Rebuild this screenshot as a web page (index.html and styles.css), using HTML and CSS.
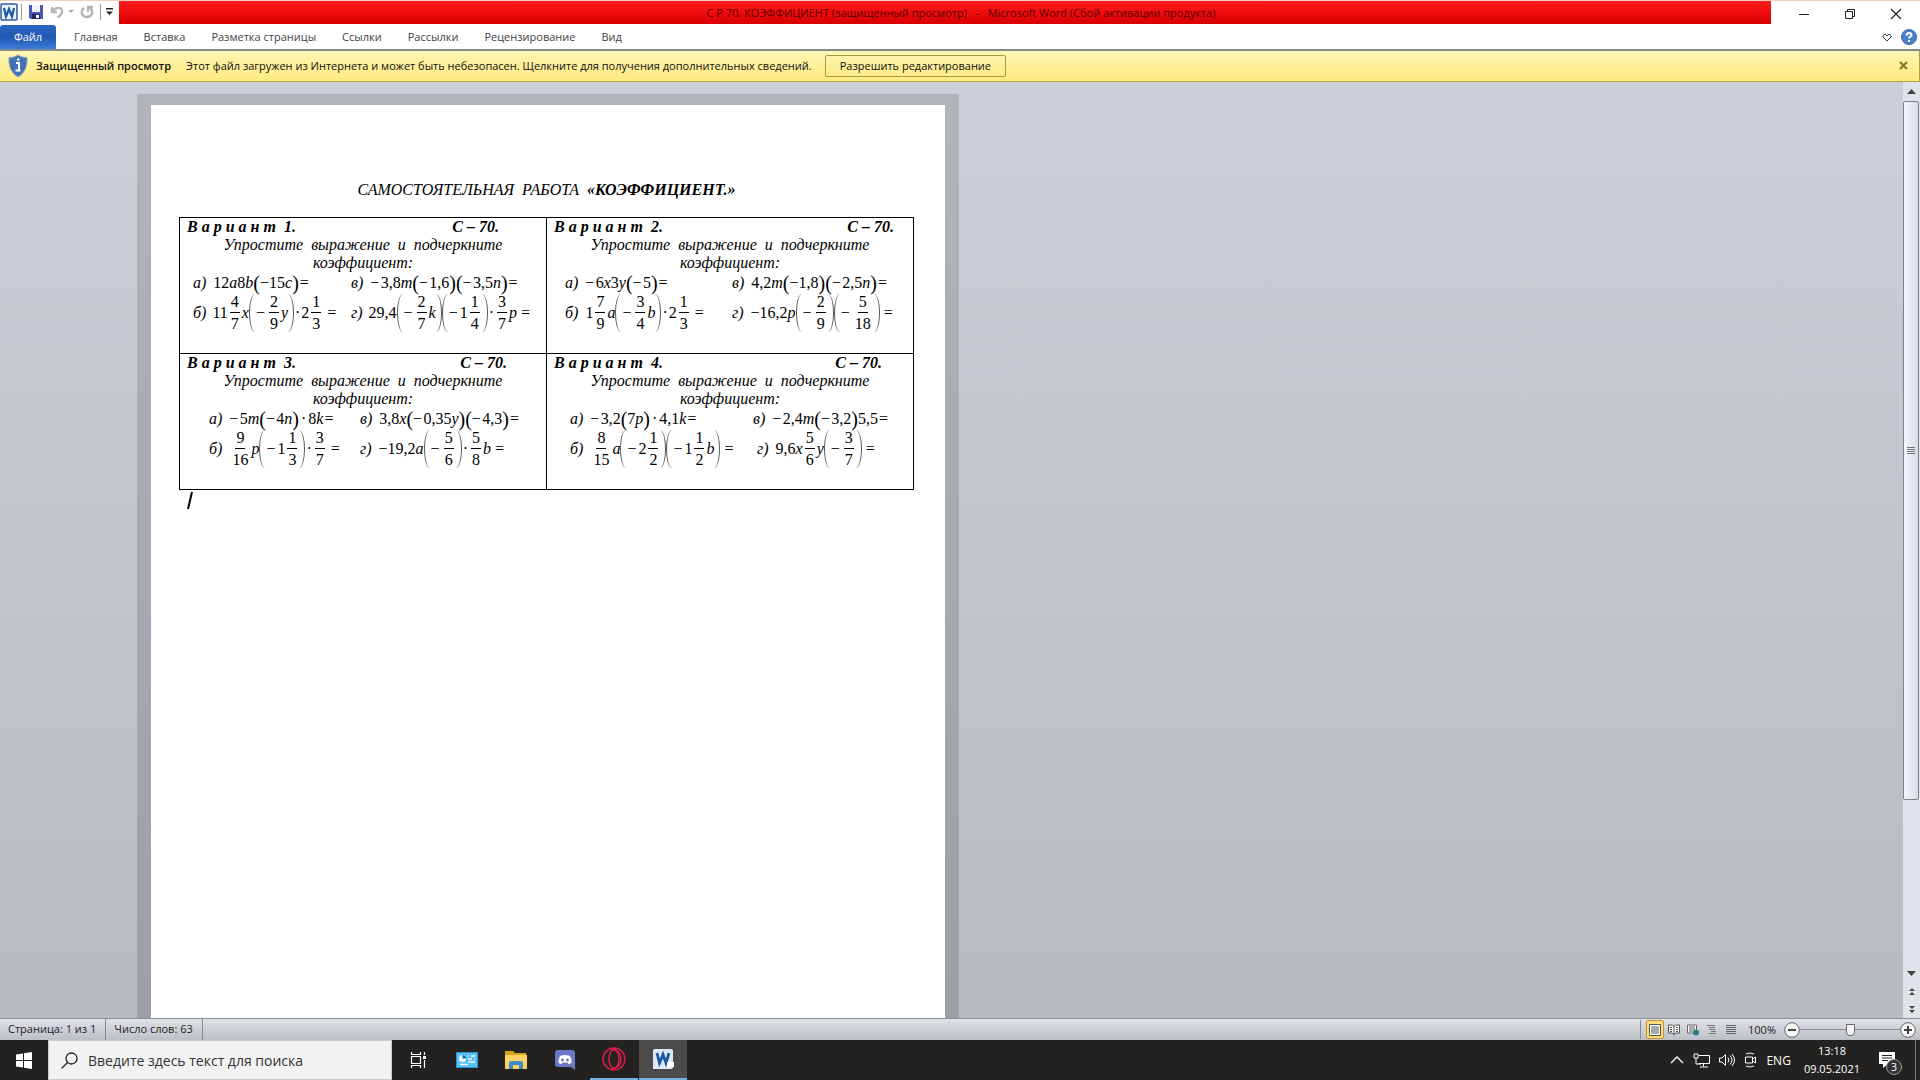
FILE: index.html
```html
<!DOCTYPE html>
<html lang="ru">
  <head>
    <meta charset="utf-8">
    <title>С Р 70. КОЭФФИЦИЕНТ</title>
    <link rel="stylesheet" href="styles.css">
  </head>

  <body>
    <header class="titlebar">
      <div class="quick">
        <svg class="word-icon" width="18" height="18" viewBox="0 0 18 18"><rect x="1" y="1" width="16" height="16" rx="1" fill="#eaf3fb" stroke="#2c5c9c" stroke-width="1.5"/><path d="M4 5l2 8.500 3-7.500 3 7.500L14 5" fill="none" stroke="#1f57a8" stroke-width="2.200"/></svg>
        <span class="sep"></span>
        <button class="save" aria-label="Сохранить"><svg width="16" height="16" viewBox="0 0 16 16"><path d="M1 1h14v14H2.500L1 13.500z" fill="#4d56b4"/><path d="M4 1h8v7H4z" fill="#f0f3fb"/><path d="M4 10h8v5H4z" fill="#20266e"/><path d="M8 11h3v3H8z" fill="#fff"/></svg></button>
        <button class="undo" aria-label="Отменить"><svg width="14" height="14" viewBox="0 0 14 14"><path d="M2 2v5h5M2.500 6.500C5 2 12 1.500 12 6c0 3-2 5-4.500 6.500" fill="none" stroke="#b5b5b5" stroke-width="2.400"/></svg></button>
        <span class="caret pale"></span>
        <button class="redo" aria-label="Повторить"><svg width="14" height="14" viewBox="0 0 14 14"><path d="M4 3C0 6 1.500 12 7 12s7-6 3-9M8 7V2h5" fill="none" stroke="#b5b5b5" stroke-width="2.400"/></svg></button>
        <span class="sep"></span>
        <button class="more" aria-label="Настройка панели"><svg width="9" height="9" viewBox="0 0 9 9"><path d="M1 1h7v1.500H1zM1 4.500h7L4.500 8z" fill="#222"/></svg></button>
      </div>
      <div class="caption">С Р 70. КОЭФФИЦИЕНТ (защищенный просмотр)&nbsp;&nbsp; -&nbsp;&nbsp; Microsoft Word (Сбой активации продукта)</div>
      <div class="window-buttons">
        <button aria-label="Свернуть"><svg width="12" height="12" viewBox="0 0 12 12"><path d="M1 6.500h10" stroke="#222"/></svg></button>
        <button aria-label="Восстановить"><svg width="12" height="12" viewBox="0 0 12 12" fill="none" stroke="#222"><path d="M1.500 3.500h7v7h-7zM3.500 3.500v-2h7v7h-2"/></svg></button>
        <button aria-label="Закрыть"><svg width="12" height="12" viewBox="0 0 12 12"><path d="M1 1l10 10M11 1L1 11" stroke="#222" stroke-width="1.200"/></svg></button>
      </div>
    </header>

    <nav class="ribbon">
      <button class="file">Файл</button>
      <button>Главная</button>
      <button>Вставка</button>
      <button>Разметка страницы</button>
      <button>Ссылки</button>
      <button>Рассылки</button>
      <button>Рецензирование</button>
      <button>Вид</button>
      <div class="ribbon-right">
        <button aria-label="Развернуть ленту"><svg width="10" height="9" viewBox="0 0 10 9"><path d="M1 2.500L3 1l2 2 2-2 2 1.500V4L5 8 1 4z" fill="none" stroke="#444"/></svg></button>
        <button aria-label="Справка"><svg width="16" height="16" viewBox="0 0 16 16"><circle cx="8" cy="8" r="7.500" fill="#4a80c8" stroke="#3566aa"/><path d="M5.500 6.500c0-3.500 5-3 5-.5 0 1.700-2.500 1.700-2.500 3.500M8 11v2" fill="none" stroke="#fff" stroke-width="2"/></svg></button>
      </div>
    </nav>

    <div class="notice">
      <svg class="shield" width="20" height="24" viewBox="0 0 20 24"><path d="M10 1c3 2 6 2.500 9 2.500C19.500 12 17 19 10 23 3 19 .5 12 1 3.500 4 3.500 7 3 10 1z" fill="#4272b4" stroke="#8fa8c8"/><path d="M8 9h3v7M7.500 16.500h5M9 5.500h2.500" fill="none" stroke="#fff" stroke-width="2"/></svg>
      <strong>Защищенный просмотр</strong>
      <span>Этот файл загружен из Интернета и может быть небезопасен. Щелкните для получения дополнительных сведений.</span>
      <button class="enable">Разрешить редактирование</button>
      <button class="dismiss" aria-label="Закрыть"><svg width="9" height="9" viewBox="0 0 9 9"><path d="M1 1l7 7M8 1L1 8" stroke="#8a7a1c" stroke-width="2.200"/></svg></button>
    </div>

    <div class="workspace">
      <div class="canvas">
        <div class="shadow">
          <main class="paper">
            <h1>САМОСТОЯТЕЛЬНАЯ&nbsp; РАБОТА&nbsp; <b>«КОЭФФИЦИЕНТ.»</b></h1>
            <table class="variants">
              <tr>
                <td class="v1">
                  <div class="head"><span>В а р и а н т&nbsp; 1.</span><span>С – 70.</span></div>
                  <p>Упростите&nbsp; выражение&nbsp; и&nbsp; подчеркните<br>коэффициент:</p>
                  <div class="row">
                    <div class="eq"><i class="label">а)</i>12<i>a</i>8<i>b</i><span class="par">(</span>−15<i>c</i><span class="par">)</span><span class="is">=</span></div>
                    <div class="eq"><i class="label">в)</i>−&#8202;3,8<i>m</i><span class="par">(</span>−&#8202;1,6<span class="par">)(</span>−&#8202;3,5<i>n</i><span class="par">)</span><span class="is">=</span></div>
                  </div>
                  <div class="row tall">
                    <div class="eq"><i class="label">б)</i>11<span class="frac"><span>4</span><span>7</span></span><i>x</i><span class="open"></span><span class="neg">−</span><span class="frac"><span>2</span><span>9</span></span><i>y</i><span class="close"></span><span class="dot">·</span>2<span class="frac"><span>1</span><span>3</span></span><span class="is">=</span></div>
                    <div class="eq"><i class="label">г)</i>29,4<span class="open"></span><span class="neg">−</span><span class="frac"><span>2</span><span>7</span></span><i>k</i><span class="close"></span><span class="open"></span><span class="neg">−</span>1<span class="frac"><span>1</span><span>4</span></span><span class="close"></span><span class="dot">·</span><span class="frac"><span>3</span><span>7</span></span><i>p</i><span class="is">=</span></div>
                  </div>
                </td>
                <td class="v2">
                  <div class="head"><span>В а р и а н т&nbsp; 2.</span><span>С – 70.</span></div>
                  <p>Упростите&nbsp; выражение&nbsp; и&nbsp; подчеркните<br>коэффициент:</p>
                  <div class="row">
                    <div class="eq"><i class="label">а)</i>−&#8202;6<i>x</i>3<i>y</i><span class="par">(</span>−&#8202;5<span class="par">)</span><span class="is">=</span></div>
                    <div class="eq"><i class="label">в)</i>4,2<i>m</i><span class="par">(</span>−1,8<span class="par">)(</span>−&#8202;2,5<i>n</i><span class="par">)</span><span class="is">=</span></div>
                  </div>
                  <div class="row tall">
                    <div class="eq"><i class="label">б)</i>1<span class="frac"><span>7</span><span>9</span></span><i>a</i><span class="open"></span><span class="neg">−</span><span class="frac"><span>3</span><span>4</span></span><i>b</i><span class="close"></span><span class="dot">·</span>2<span class="frac"><span>1</span><span>3</span></span><span class="is">=</span></div>
                    <div class="eq"><i class="label">г)</i>−16,2<i>p</i><span class="open"></span><span class="neg">−</span><span class="frac"><span>2</span><span>9</span></span><span class="close"></span><span class="open"></span><span class="neg">−</span><span class="frac"><span>5</span><span>18</span></span><span class="close"></span><span class="is">=</span></div>
                  </div>
                </td>
              </tr>
              <tr>
                <td class="v3">
                  <div class="head"><span>В а р и а н т&nbsp; 3.</span><span>С – 70.</span></div>
                  <p>Упростите&nbsp; выражение&nbsp; и&nbsp; подчеркните<br>коэффициент:</p>
                  <div class="row">
                    <div class="eq"><i class="label">а)</i>−&#8202;5<i>m</i><span class="par">(</span>−&#8202;4<i>n</i><span class="par">)</span><span class="dot">·</span>8<i>k</i><span class="is">=</span></div>
                    <div class="eq"><i class="label">в)</i>3,8<i>x</i><span class="par">(</span>−&#8202;0,35<i>y</i><span class="par">)(</span>−&#8202;4,3<span class="par">)</span><span class="is">=</span></div>
                  </div>
                  <div class="row tall">
                    <div class="eq"><i class="label">б)</i><span class="frac"><span>9</span><span>16</span></span><i>p</i><span class="open"></span><span class="neg">−</span>1<span class="frac"><span>1</span><span>3</span></span><span class="close"></span><span class="dot">·</span><span class="frac"><span>3</span><span>7</span></span><span class="is">=</span></div>
                    <div class="eq"><i class="label">г)</i>−19,2<i>a</i><span class="open"></span><span class="neg">−</span><span class="frac"><span>5</span><span>6</span></span><span class="close"></span><span class="dot">·</span><span class="frac"><span>5</span><span>8</span></span><i>b</i><span class="is">=</span></div>
                  </div>
                </td>
                <td class="v4">
                  <div class="head"><span>В а р и а н т&nbsp; 4.</span><span>С – 70.</span></div>
                  <p>Упростите&nbsp; выражение&nbsp; и&nbsp; подчеркните<br>коэффициент:</p>
                  <div class="row">
                    <div class="eq"><i class="label">а)</i>−&#8202;3,2<span class="par">(</span>7<i>p</i><span class="par">)</span><span class="dot">·</span>4,1<i>k</i><span class="is">=</span></div>
                    <div class="eq"><i class="label">в)</i>−&#8202;2,4<i>m</i><span class="par">(</span>−&#8202;3,2<span class="par">)</span>5,5<span class="is">=</span></div>
                  </div>
                  <div class="row tall">
                    <div class="eq"><i class="label">б)</i><span class="frac"><span>8</span><span>15</span></span><i>a</i><span class="open"></span><span class="neg">−</span>2<span class="frac"><span>1</span><span>2</span></span><span class="close"></span><span class="open"></span><span class="neg">−</span>1<span class="frac"><span>1</span><span>2</span></span><i>b</i><span class="close"></span><span class="is">=</span></div>
                    <div class="eq"><i class="label">г)</i>9,6<i>x</i><span class="frac"><span>5</span><span>6</span></span><i>y</i><span class="open"></span><span class="neg">−</span><span class="frac"><span>3</span><span>7</span></span><span class="close"></span><span class="is">=</span></div>
                  </div>
                </td>
              </tr>
            </table>
            <svg class="text-cursor" width="8" height="20" viewBox="0 0 8 20"><path d="M6 2L2 19" stroke="#000" stroke-width="2"/></svg>
          </main>
        </div>
      </div>
      <div class="scrollbar">
        <button aria-label="Вверх"><svg width="9" height="5" viewBox="0 0 9 5"><path d="M0 5l4.500-5L9 5z" fill="#444"/></svg></button>
        <div class="track"><div class="thumb"><svg width="8" height="8" viewBox="0 0 8 8"><path d="M0 .5h8M0 2.500h8M0 4.500h8M0 6.500h8" stroke="#70757c"/></svg></div></div>
        <button aria-label="Вниз"><svg width="9" height="5" viewBox="0 0 9 5"><path d="M0 0l4.500 5L9 0z" fill="#444"/></svg></button>
        <button aria-label="Предыдущая страница"><svg width="6" height="7" viewBox="0 0 6 7"><path d="M0 3l3-3 3 3zM0 7l3-3 3 3z" fill="#444"/></svg></button>
        <button aria-label="Следующая страница"><svg width="6" height="7" viewBox="0 0 6 7"><path d="M0 0l3 3 3-3zM0 4l3 3 3-3z" fill="#444"/></svg></button>
      </div>
    </div>

    <footer class="status">
      <span class="cell">Страница: 1 из 1</span>
      <span class="cell">Число слов: 63</span>
      <div class="views">
        <button class="current" aria-label="Разметка страницы"><svg width="12" height="12" viewBox="0 0 12 12"><path d="M.5.500h11v11H.500z" fill="#fff" stroke="#555"/><path d="M2 3h8M2 5h8M2 7h8M2 9h8" stroke="#555"/></svg></button>
        <button aria-label="Режим чтения"><svg width="12" height="12" viewBox="0 0 12 12"><path d="M.5 1h4L6 2.500 7.500 1h4v8h-4L6 11 4.500 9h-4zM6 2v8" fill="#fff" stroke="#555"/><path d="M2 3.500h2M2 5.500h2M2 7.500h2M8 3.500h2M8 5.500h2M8 7.500h2" stroke="#555"/></svg></button>
        <button aria-label="Веб-документ"><svg width="12" height="12" viewBox="0 0 12 12"><path d="M.5 1h9v8h-9z" fill="#fff" stroke="#666"/><path d="M2 3h6M2 5h6M2 7h4" stroke="#555"/><circle cx="9" cy="8.500" r="3" fill="#2e7c88"/></svg></button>
        <button aria-label="Структура"><svg width="12" height="12" viewBox="0 0 12 12"><path d="M1 1.500h8M3 3.500h6M3 5.500h6M5 7.500h5M3 9.500h7" stroke="#777"/></svg></button>
        <button aria-label="Черновик"><svg width="12" height="12" viewBox="0 0 12 12"><path d="M1 1.500h10M1 3.500h10M1 5.500h10M1 7.500h10M1 9.500h10" stroke="#666"/></svg></button>
      </div>
      <label class="percent" for="zoom">100%</label>
      <button class="round" aria-label="Уменьшить"><svg width="16" height="16" viewBox="0 0 16 16"><circle cx="8" cy="8" r="7.300" fill="#f7f7f7" stroke="#666"/><path d="M4 8h8" stroke="#444" stroke-width="2"/></svg></button>
      <input id="zoom" type="range" min="0" max="100" value="50">
      <button class="round" aria-label="Увеличить"><svg width="16" height="16" viewBox="0 0 16 16"><circle cx="8" cy="8" r="7.300" fill="#f7f7f7" stroke="#666"/><path d="M4 8h8M8 4v8" stroke="#444" stroke-width="2"/></svg></button>
    </footer>

    <div class="taskbar">
      <button class="start" aria-label="Пуск"><svg width="16" height="17" viewBox="0 0 16 17"><path d="M0 2.500l7-1V8H0zM8 1.300L16 0v8H8zM0 9h7v6.500l-7-1zM8 9h8v8l-8-1.300z" fill="#fff"/></svg></button>
      <div class="search">
        <svg width="17" height="17" viewBox="0 0 17 17"><circle cx="10.500" cy="6.500" r="5.500" fill="none" stroke="#222" stroke-width="1.300"/><path d="M6.500 10.500L.5 16.500" stroke="#222" stroke-width="1.300"/></svg>
        <input type="text" aria-label="Поиск" placeholder="Введите здесь текст для поиска">
      </div>
      <div class="apps">
        <button aria-label="Представление задач"><svg width="17" height="16" viewBox="0 0 17 16" fill="none" stroke="#fff"><path d="M1.500 0v2.500h9V0M1.500 16v-2.500h9V16M1.500 4.500h9v7h-9zM14.500 0v3M14.500 8v8" stroke-width="1.200"/><path d="M13 4h3v3h-3z" fill="#fff" stroke="none"/></svg></button>
        <button aria-label="Панель управления"><svg width="22" height="16" viewBox="0 0 22 16"><path d="M.5.500h21v15H.500z" fill="#5bc0f2" stroke="#2c93d4"/><circle cx="6.500" cy="6.500" r="3.500" fill="#eaf8ff"/><path d="M6.500 6.500V3A3.500 3.500 0 0 1 10 6.500z" fill="#1b6fae"/><path d="M12 4h7M12 7h7M12 10h7M4 12.500h8" stroke="#e6f7ff" stroke-width="1.500"/><path d="M14 3v2M17 6v2" stroke="#1b6fae"/></svg></button>
        <button aria-label="Проводник"><svg width="22" height="18" viewBox="0 0 22 18"><path d="M0 0h8l2 2h11v6H0z" fill="#d9a21b"/><path d="M0 4h22v14H0z" fill="#fad364"/><path d="M4 18v-6q0-2 2-2h10q2 0 2 2v6h-4v-4H8v4z" fill="#3d8dc4"/></svg></button>
        <button aria-label="Discord"><svg width="20" height="20" viewBox="0 0 20 20"><path d="M3 0h14q3 0 3 3v17l-4-3H3q-3 0-3-3V3q0-3 3-3z" fill="#6a78c8"/><path d="M5 6q5-2 10 0 2 4 1.500 7-2 1-3 1l-1-1.500h-5L6.500 14q-1 0-3-1Q3 10 5 6z" fill="#fff"/><circle cx="7.500" cy="10" r="1.400" fill="#6a78c8"/><circle cx="12.500" cy="10" r="1.400" fill="#6a78c8"/></svg></button>
        <button class="running" aria-label="Opera"><svg width="24" height="24" viewBox="0 0 24 24" fill="none" stroke="#d81e48" stroke-width="1.500"><circle cx="12" cy="12" r="11"/><ellipse cx="12" cy="12" rx="5" ry="9.500"/><path d="M9 3c8-1 10 5 10 9s-2 10-10 9"/></svg></button>
        <button class="running active" aria-label="Word"><svg width="21" height="20" viewBox="0 0 21 20"><path d="M2 0h16q2 0 2 2v16q0 2-2 2H0V2q0-2 2-2z" fill="#dfeaf6"/><path d="M4 4l2.500 10L10 5.500 13 14l3-10" fill="none" stroke="#1d57a8" stroke-width="2.800"/><path d="M14 13h7v5h-7z" fill="#fff"/></svg></button>
      </div>
      <div class="tray">
        <svg class="up" width="14" height="8" viewBox="0 0 14 8"><path d="M1 7l6-6 6 6" fill="none" stroke="#fff" stroke-width="1.300"/></svg>
        <svg class="net" width="17" height="15" viewBox="0 0 17 15" fill="none" stroke="#fff"><path d="M5.500 2.500h11v8h-11M10.500 10.500v3M7 14h8M1 1h4v4H1zM3 5v6h5"/></svg>
        <svg class="sound" width="16" height="14" viewBox="0 0 16 14" fill="none" stroke="#fff"><path d="M.5 5h2.500l3.500-3.500v11L3 9H.500zM9 4.500q2 2.500 0 5M11 2.500q4 4.500 0 9M13 1q5 6 0 12"/></svg>
        <svg class="cam" width="13" height="16" viewBox="0 0 13 16" fill="none" stroke="#fff"><path d="M1.500 5h7v6h-7zM8.500 7l3-2v6l-3-2M2 2q4.500-2 8 0M2 14q4.500 2 8 0"/></svg>
        <span class="lang">ENG</span>
        <div class="clock"><span>13:18</span><span>09.05.2021</span></div>
        <button class="action" aria-label="Уведомления"><svg width="16" height="17" viewBox="0 0 16 17"><path d="M0 0h16v12H9l-5 4v-4H0z" fill="#fff"/><path d="M3 3.500h10M3 6h10M3 8.500h6" stroke="#232121"/></svg><span class="badge">3</span></button>
      </div>
    </div>
  </body>
</html>
```
FILE: styles.css
```css
* {
  box-sizing: border-box;
}

body {
  margin: 0;
  height: 100vh;
  display: flex;
  flex-direction: column;
  overflow: hidden;
  background-color: #fff;
  color: #222;
  font-family: "Open Sans", "Noto Sans", sans-serif;
  font-size: 11px;
}

button {
  display: flex;
  align-items: center;
  justify-content: center;
  padding: 0;
  border: none;
  background: none;
  color: inherit;
  font: inherit;
}

svg {
  display: block;
  flex-shrink: 0;
}

/* title bar */
.titlebar {
  display: flex;
  height: 24px;
  border-top: 1px solid #f3cdbd;
}

.quick {
  display: flex;
  align-items: center;
  width: 119px;
  padding-bottom: 2px;
  gap: 6px;
}

.word-icon {
  margin-right: -3px;
}

.sep {
  width: 1px;
  height: 16px;
  background-color: #999;
}

.undo {
  margin-right: -2px;
}

.caret {
  border: 3px solid transparent;
  border-top-color: #aaa;
  border-bottom: none;
}

.more {
  margin-left: -2px;
}

.caption {
  flex: 1;
  padding-left: 32px;
  text-align: center;
  line-height: 23px;
  color: #5a0000;
  background: linear-gradient(#fb2020, #ee0c0c 50%, #d80000);
}

.window-buttons {
  display: flex;
  width: 149px;
  padding: 3px 0 0 10px;
}

.window-buttons button {
  width: 46px;
}

/* ribbon tabs */
.ribbon {
  display: flex;
  height: 27px;
  padding-top: 1px;
  border-bottom: 2px solid #84898f;
}

.ribbon button {
  padding: 0 13px 2px;
  color: #444;
}

.ribbon .file {
  width: 56px;
  margin-right: 5px;
  border-radius: 3px 3px 0 0;
  background: linear-gradient(#2a66c2, #2358b4 50%, #3a7cd8);
  color: #fff;
}

.ribbon-right {
  display: flex;
  gap: 9px;
  margin-left: auto;
  padding-right: 3px;
}

.ribbon-right button {
  padding: 0;
}

/* protected view bar */
.notice {
  display: flex;
  align-items: center;
  height: 31px;
  padding: 0 11px 1px 8px;
  border: 1px solid #b0a04c;
  border-width: 0 1px 1px 0;
  background: linear-gradient(#fef6b4, #fdea80);
  color: #111;
}

.shield {
  margin-right: 8px;
}

.notice strong {
  margin-right: 15px;
  font-weight: 600;
}

.enable {
  height: 22px;
  margin-left: 13px;
  padding: 0 14px;
  border: 1px solid #a89848;
  border-radius: 2px;
}

.dismiss {
  margin-left: auto;
}

/* document area */
.workspace {
  display: flex;
  flex: 1;
  min-height: 0;
  background: linear-gradient(#ccd0d6, #b8bbc0);
}

.canvas {
  flex: 1;
  padding: 12px 0 0 137px;
  overflow: hidden;
}

.shadow {
  width: 822px;
  height: 100%;
  padding: 11px 14px 0;
  background: linear-gradient(#b1b4b8, #9c9fa4);
}

.paper {
  height: 100%;
  padding: 75px 31px 0 28px;
  background-color: #fff;
  color: #000;
  font-family: "Liberation Serif", serif;
  font-size: 16px;
}

h1 {
  margin: 0 0 18px;
  text-align: center;
  font-size: 16px;
  font-weight: normal;
  font-style: italic;
  line-height: 19px;
}

.variants {
  width: 100%;
  table-layout: fixed;
  border-collapse: collapse;
}

.variants td {
  height: 136px;
  padding: 0 7px;
  vertical-align: top;
  border: 1px solid #000;
}

.head {
  display: flex;
  justify-content: space-between;
  line-height: 18px;
  font-weight: bold;
  font-style: italic;
}

.v1 .head { padding-right: 40px; }
.v2 .head { padding-right: 12px; }
.v3 .head { padding-right: 32px; }
.v4 .head { padding-right: 24px; }

.variants p {
  margin: 0;
  text-align: center;
  font-style: italic;
  line-height: 18px;
}

.row {
  display: grid;
  align-items: center;
  height: 21px;
  white-space: nowrap;
}

.row.tall {
  height: 36px;
}

.v1 .row { grid-template-columns: 158px 1fr; padding-left: 6px; }
.v2 .row { grid-template-columns: 167px 1fr; padding-left: 11px; }
.v3 .row { grid-template-columns: 151px 1fr; padding-left: 22px; }
.v4 .row { grid-template-columns: 183px 1fr; padding-left: 16px; }

.v4 .tall {
  grid-template-columns: 187px 1fr;
}

.eq {
  display: flex;
  align-items: center;
  line-height: 18px;
}

.label {
  margin-right: 7px;
}

.v1 .tall .label {
  margin-right: 6px;
}

.par {
  font-size: 20px;
}

.is {
  margin-left: 1px;
}

.tall .is {
  margin-left: 4px;
}

.neg {
  margin: 0 2px 0 1px;
}

.dot {
  margin: 0 2px;
}

.tall .dot {
  margin: 0 1px;
}

.frac {
  display: flex;
  flex-direction: column;
  align-items: center;
  margin: 0 2px;
}

.frac span {
  padding: 2px 1px 0;
}

.frac span:first-child {
  padding: 0 1px 1px;
  border-bottom: 1px solid #000;
}

.open, .close {
  width: 6px;
  height: 38px;
}

.open {
  border-left: 1px solid #555;
  border-radius: 6px 0 0 6px / 19px 0 0 19px;
}

.close {
  border-right: 1px solid #555;
  border-radius: 0 6px 6px 0 / 0 19px 19px 0;
}

.text-cursor {
  margin-left: 7px;
}

/* vertical scrollbar */
.scrollbar {
  display: flex;
  flex-direction: column;
  width: 17px;
  background-color: #dfe3ea;
}

.scrollbar button {
  height: 18px;
}

.track {
  flex: 1;
  padding-top: 1px;
}

.thumb {
  display: flex;
  align-items: center;
  justify-content: center;
  width: 16px;
  height: 81%;
  border: 1px solid #7d828b;
  border-radius: 2px;
  background: linear-gradient(90deg, #f6f8fb, #d5dae6);
}

/* status bar */
.status {
  display: flex;
  align-items: center;
  height: 22px;
  padding-right: 4px;
  border-top: 1px solid #8a8e94;
  background: linear-gradient(#dfe3e7, #bcc0c5);
}

.cell {
  padding: 0 9px 2px 8px;
  border-right: 1px solid #888c92;
  line-height: 19px;
}

.views {
  display: flex;
  gap: 1px;
  margin-left: auto;
  padding-left: 5px;
  border-left: 1px solid #888c92;
}

.views button {
  width: 18px;
  height: 19px;
}

.views .current {
  border: 1px solid #c09433;
  border-radius: 2px;
  background-color: #fbdc7c;
}

.percent {
  margin: 0 8px 1px;
}

.status input {
  width: 100px;
  height: 16px;
  margin: 0;
  appearance: none;
  background: linear-gradient(#8a8e94, #8a8e94) center / 100% 1px no-repeat;
}

.status input::-webkit-slider-thumb {
  appearance: none;
  width: 9px;
  height: 12px;
  border: 1px solid #666;
  border-radius: 1px 1px 5px 5px;
  background-color: #f4f4f4;
}

/* windows taskbar */
.taskbar {
  display: flex;
  height: 40px;
  background-color: #242220;
  color: #fff;
}

.start {
  width: 48px;
}

.search {
  display: flex;
  align-items: center;
  width: 344px;
  padding-left: 12px;
  border: 1px solid #ccc;
  background-color: #f2f2f2;
}

.search input {
  flex: 1;
  margin-left: 10px;
  padding: 0;
  border: none;
  outline: none;
  background: none;
  font: 14px "Open Sans", "Noto Sans", sans-serif;
}

.search input::placeholder {
  color: #333;
}

.apps {
  display: flex;
  gap: 1px;
  padding-left: 2px;
}

.apps button {
  width: 48px;
}

.running {
  border-bottom: 2px solid #76b0dc;
}

.active {
  background-color: #4d4b4a;
}

.tray {
  display: flex;
  align-items: center;
  margin-left: auto;
  gap: 9px;
}

.lang {
  font-size: 12px;
}

.clock {
  display: flex;
  flex-direction: column;
  align-items: center;
  margin-left: 4px;
  line-height: 18px;
}

.action {
  position: relative;
  justify-content: flex-start;
  width: 47px;
  height: 40px;
  margin-right: 4px;
  padding-left: 10px;
  border-right: 1px solid #777;
}

.badge {
  position: absolute;
  left: 17px;
  top: 19px;
  width: 16px;
  height: 16px;
  border: 1px solid #999;
  border-radius: 8px;
  background-color: #333;
  line-height: 14px;
}
```
